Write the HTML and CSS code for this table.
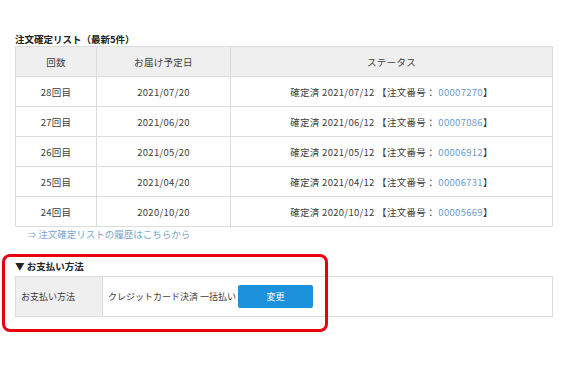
FILE: index.html
```html
<!DOCTYPE html>
<html lang="ja">
<head>
<meta charset="utf-8">
<link rel="stylesheet" href="styles.css">
</head>
<body>
<div class="page">
  <h2 class="title">注文確定リスト（最新5件）</h2>
  <table class="list">
    <colgroup><col class="c1"><col class="c2"><col class="c3"></colgroup>
    <thead>
      <tr><th>回数</th><th>お届け予定日</th><th>ステータス</th></tr>
    </thead>
    <tbody>
      <tr><td>28回目</td><td>2021/07/20</td><td>確定済 2021/07/12 【注文番号： <span class="num">00007270</span>】</td></tr>
      <tr><td>27回目</td><td>2021/06/20</td><td>確定済 2021/06/12 【注文番号： <span class="num">00007086</span>】</td></tr>
      <tr><td>26回目</td><td>2021/05/20</td><td>確定済 2021/05/12 【注文番号： <span class="num">00006912</span>】</td></tr>
      <tr><td>25回目</td><td>2021/04/20</td><td>確定済 2021/04/12 【注文番号： <span class="num">00006731</span>】</td></tr>
      <tr><td>24回目</td><td>2020/10/20</td><td>確定済 2020/10/12 【注文番号： <span class="num">00005669</span>】</td></tr>
    </tbody>
  </table>
  <p class="history"><span class="arrow">⇒</span> 注文確定リストの履歴はこちらから</p>

  <section class="pay">
    <h3 class="pay-title">▼ お支払い方法</h3>
    <div class="pay-table">
      <div class="pay-label">お支払い方法</div>
      <div class="pay-value">
        <span>クレジットカード決済 一括払い</span>
        <span class="btn">変更</span>
      </div>
    </div>
    <div class="highlight"></div>
  </section>
</div>
</body>
</html>
```
FILE: styles.css
```css
html, body {
  margin: 0;
  padding: 0;
  background: #fff;
}
body {
  min-height: 380px;
  font-family: "Noto Sans CJK JP", "Noto Sans", sans-serif;
  color: #3c3c3c;
}
.page {
  position: relative;
  width: 538px;
  padding: 33px 21px 60px 15px;
}
.title {
  margin: 0;
  font-size: 9.5px;
  line-height: 13px;
  font-weight: bold;
  color: #222;
}
.list {
  width: 538px;
  border-collapse: collapse;
  font-size: 9.5px;
  letter-spacing: 0.3px;
}
.list .c1 { width: 81px; }
.list .c2 { width: 134px; }
.list th, .list td {
  border: 1px solid #dcdcdc;
  height: 29px;
  padding: 0;
  text-align: center;
  font-weight: normal;
}
.list th {
  background: #efefef;
}
.num {
  color: #6c9cc6;
}
.history {
  margin: 1px 0 0 13px;
  font-size: 9.5px;
  line-height: 12px;
  color: #7aa6cc;
}
.arrow {
  font-size: 8px;
}
.pay {
  margin-top: 19px;
  position: relative;
}
.pay-title {
  margin: 0 0 4px;
  font-size: 9.5px;
  line-height: 12px;
  font-weight: bold;
  color: #222;
}
.pay-table {
  display: flex;
  border: 1px solid #dcdcdc;
  height: 39px;
  font-size: 9px;
}
.pay-label {
  width: 81px;
  padding-left: 5px;
  background: #efefef;
  border-right: 1px solid #dcdcdc;
  display: flex;
  align-items: center;
}
.pay-value {
  display: flex;
  align-items: center;
  gap: 2px;
  padding-left: 5px;
}
.btn {
  width: 75px;
  height: 23px;
  background: #1d92dc;
  color: #fff;
  border-radius: 2px;
  display: flex;
  align-items: center;
  justify-content: center;
}
.highlight {
  position: absolute;
  left: -13px;
  top: -6px;
  width: 320px;
  height: 72px;
  border: 3px solid #e8000f;
  border-radius: 8px;
}
```
